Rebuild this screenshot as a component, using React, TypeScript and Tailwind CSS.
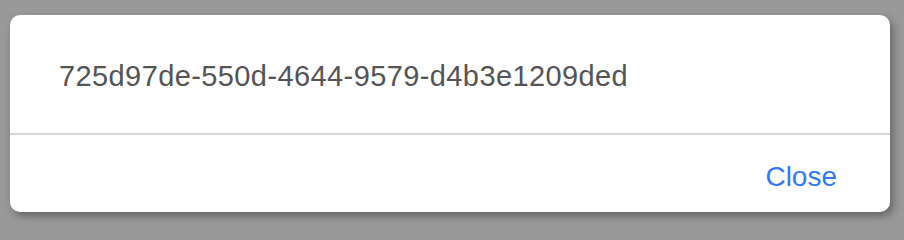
export default function App() {
  return (
    <div className="h-screen overflow-hidden bg-[#999999] pl-[10px] pr-[14px] pt-[15px] font-['Liberation_Sans',Arial,sans-serif]">
      <div className="flex h-[197px] w-[880px] flex-col rounded-[10px] bg-white shadow-[3px_4px_8px_rgba(0,0,0,0.35)]">
        <div className="flex h-[118px] items-center px-[49px] pt-[5px]">
          <p className="text-[29px] tracking-[0.4px] text-[#545454]">725d97de-550d-4644-9579-d4b3e1209ded</p>
        </div>
        <div className="h-[2px] bg-[#d6d6d6]" />
        <div className="flex flex-1 items-center justify-end px-[53px] pt-[6px]">
          <button className="text-[28px] text-[#3479f4]">Close</button>
        </div>
      </div>
    </div>
  );
}
